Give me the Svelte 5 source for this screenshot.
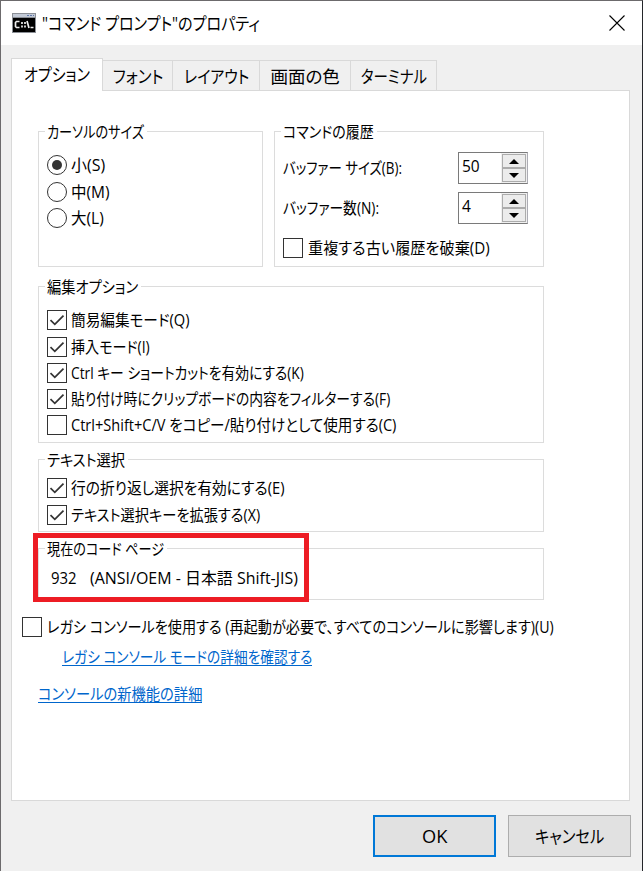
<script>
  const tabs = [
    { text: "オプション", width: 66, cell: 92, active: true },
    { text: "フォント", width: 50, cell: 70 },
    { text: "レイアウト", width: 65, cell: 87 },
    { text: "画面の色", width: 69, cell: 91 },
    { text: "ターミナル", width: 66, cell: 86 },
  ];

  let cursorSize = $state("S");

  const cursorSizes = [
    { id: "S", text: "小(S)", width: 34 },
    { id: "M", text: "中(M)", width: 39 },
    { id: "L", text: "大(L)", width: 33 },
  ];

  let history = $state([
    { text: "バッファー サイズ(B):", width: 119, value: 50 },
    { text: "バッファー数(N):", width: 96, value: 4 },
  ]);

  let discard = $state({ text: "重複する古い履歴を破棄(D)", width: 182, checked: false });

  let editOptions = $state([
    { text: "簡易編集モード(Q)", width: 118, checked: true },
    { text: "挿入モード(I)", width: 79, checked: true },
    { text: "Ctrl キー ショートカットを有効にする(K)", width: 233, checked: true },
    { text: "貼り付け時にクリップボードの内容をフィルターする(F)", width: 319, checked: true },
    { text: "Ctrl+Shift+C/V をコピー/貼り付けとして使用する(C)", width: 325, checked: false },
  ]);

  let selectOptions = $state([
    { text: "行の折り返し選択を有効にする(E)", width: 214, checked: true },
    { text: "テキスト選択キーを拡張する(X)", width: 189, checked: true },
  ]);

  let legacy = $state({
    text: "レガシ コンソールを使用する (再起動が必要で、すべてのコンソールに影響します)(U)",
    width: 507,
    checked: false,
  });

  // Condenses a run of text to the width the dialog reserves for it
  function fit(node, width) {
    const natural = node.firstElementChild.offsetWidth;
    node.style.width = `${width}px`;
    node.firstElementChild.style.transform = `scaleX(${width / natural})`;
  }
</script>

{#snippet label(text, width)}
  <span class="fit" use:fit={width}><span class="run">{text}</span></span>
{/snippet}

{#snippet check(item)}
  <button class="option" onclick={() => (item.checked = !item.checked)}>
    <span class="box">
      {#if item.checked}
        <svg width="18" height="18" viewBox="0 0 18 18">
          <path d="M2.5 9.2 6.8 13.4 15.5 4.6" />
        </svg>
      {/if}
    </span>
    {@render label(item.text, item.width)}
  </button>
{/snippet}

<div class="window">
  <header class="titlebar">
    <svg class="icon" width="24" height="20" viewBox="0 0 24 20">
      <rect width="24" height="20" fill="#8b8f96" />
      <rect x="1" y="1" width="22" height="3" fill="#c3cad6" />
      <path d="M15 2.5h2M18 2.5h2M21 2.5h1" stroke="#5f77a8" />
      <rect x="1" y="5" width="22" height="14" fill="#000" />
      <path
        d="M7.5 8.5H4.5L3.5 9.5V13.5L4.5 14.5H7.5M10 9v2M10 12.5v2M13 9v2M13 12.5v2M15 8l2 7M18.5 14.5H21.5"
        fill="none" stroke="#f0f0f0" stroke-width="1.7"
      />
    </svg>
    <h1>{@render label('"コマンド プロンプト"のプロパティ', 218)}</h1>
    <button class="close" aria-label="閉じる">
      <svg width="16" height="16" viewBox="0 0 16 16">
        <path d="M.5.5l15 15M15.5.5l-15 15" />
      </svg>
    </button>
  </header>

  <nav class="tabs">
    {#each tabs as tab}
      <button class="tab" class:active={tab.active} style:width="{tab.cell}px">
        {@render label(tab.text, tab.width)}
      </button>
    {/each}
  </nav>

  <main class="panel">
    <div class="columns">
      <section class="group cursor">
        <h2>{@render label("カーソルのサイズ", 97)}</h2>
        {#each cursorSizes as size}
          <button class="option" onclick={() => (cursorSize = size.id)}>
            <span class="radio" class:on={cursorSize === size.id}></span>
            {@render label(size.text, size.width)}
          </button>
        {/each}
      </section>

      <section class="group history">
        <h2>{@render label("コマンドの履歴", 91)}</h2>
        {#each history as row}
          <div class="row">
            {@render label(row.text, row.width)}
            <div class="number">
              <span class="value">{row.value}</span>
              <div class="spin">
                <button aria-label="増やす" onclick={() => row.value++}>
                  <svg width="10" height="5" viewBox="0 0 10 5"><path d="M0 5 5 0l5 5z" /></svg>
                </button>
                <button aria-label="減らす" onclick={() => row.value--}>
                  <svg width="10" height="5" viewBox="0 0 10 5"><path d="M0 0l5 5 5-5z" /></svg>
                </button>
              </div>
            </div>
          </div>
        {/each}
        {@render check(discard)}
      </section>
    </div>

    <section class="group edit">
      <h2>{@render label("編集オプション", 91)}</h2>
      {#each editOptions as item}
        {@render check(item)}
      {/each}
    </section>

    <section class="group select">
      <h2>{@render label("テキスト選択", 78)}</h2>
      {#each selectOptions as item}
        {@render check(item)}
      {/each}
    </section>

    <section class="group codepage">
      <h2>{@render label("現在のコード ページ", 117)}</h2>
      <p>{@render label("932", 26)}{@render label("(ANSI/OEM - 日本語 Shift-JIS)", 208)}</p>
      <div class="highlight"></div>
    </section>

    <div class="legacy">{@render check(legacy)}</div>
    <a class="indent" href="#legacy">{@render label("レガシ コンソール モードの詳細を確認する", 250)}</a>
    <a href="#features">{@render label("コンソールの新機能の詳細", 164)}</a>
  </main>

  <footer>
    <button class="default">{@render label("OK", 25)}</button>
    <button>{@render label("キャンセル", 69)}</button>
  </footer>
</div>

<style>
  :global(body) {
    margin: 0;
  }

  .window {
    box-sizing: border-box;
    width: 643px;
    height: 871px;
    overflow: hidden;
    background: #f0f0f0;
    border: 1px solid #6c6a6c;
    border-right-color: #24262a;
    border-bottom: 0;
    color: #000;
    font: 16px/20px "Open Sans", "Noto Sans CJK JP", sans-serif;
    font-feature-settings: "palt";
  }

  button {
    padding: 0;
    border: 0;
    background: none;
    color: inherit;
    font: inherit;
    font-feature-settings: inherit;
  }

  .fit {
    display: block;
    flex: none;
    height: 20px;
    font-size: 16px;
    white-space: pre;
    text-align: left;
  }

  .run {
    display: inline-block;
    font-size: 15.5px;
    line-height: 20px;
    transform-origin: left;
  }

  .titlebar {
    display: flex;
    align-items: center;
    height: 44px;
    padding-left: 11px;
    background: #fff;
  }

  .icon {
    margin-right: 6px;
  }

  h1 {
    flex: 1;
    margin: 0;
    font-size: 16px;
    font-weight: 400;
  }

  h1 .run,
  .tab .run,
  footer .run {
    font-size: 17.5px;
  }

  .close {
    display: flex;
    margin-right: 17px;
  }

  .close path {
    stroke: #000;
    stroke-width: 1.1;
  }

  .tabs {
    display: flex;
    align-items: flex-end;
    height: 45px;
    padding-left: 10px;
  }

  .tab {
    display: flex;
    justify-content: center;
    align-items: center;
    box-sizing: border-box;
    height: 31px;
    border: 1px solid #d9d9d9;
    border-left: 0;
    margin-bottom: -1px;
  }

  .tab.active {
    position: relative;
    height: 33px;
    padding-bottom: 2px;
    border-left: 1px solid #d9d9d9;
    border-bottom: 0;
    background: #fff;
  }

  .panel {
    box-sizing: border-box;
    width: 619px;
    height: 711px;
    margin-left: 10px;
    padding: 40px 0 0 26px;
    border: 1px solid #d9d9d9;
    background: #fff;
  }

  .columns {
    display: flex;
    gap: 11px;
  }

  .group {
    position: relative;
    box-sizing: border-box;
    width: 506px;
    padding-left: 8px;
    border: 1px solid #dcdcdc;
  }

  h2 {
    width: max-content;
    height: 20px;
    margin: -10px 0 0 -2px;
    padding: 0 3px 0 2px;
    background: #fff;
    font-size: 16px;
    font-weight: 400;
  }

  .option {
    display: flex;
    align-items: center;
    gap: 4px;
    height: 20px;
    margin-bottom: 6px;
  }

  .box,
  .radio {
    box-sizing: border-box;
    width: 20px;
    height: 20px;
    border: 1px solid #333;
    background: #fff;
  }

  .box svg {
    display: block;
  }

  .box path {
    fill: none;
    stroke: #333;
    stroke-width: 1.7;
  }

  .radio {
    display: flex;
    justify-content: center;
    align-items: center;
    border-radius: 50%;
  }

  .radio.on::before {
    content: "";
    width: 10px;
    height: 10px;
    border-radius: 50%;
    background: #333;
  }

  .cursor {
    width: 225px;
    height: 136px;
  }

  .cursor h2 {
    margin-bottom: 13px;
  }

  .history {
    width: 270px;
    height: 136px;
  }

  .history h2 {
    margin-bottom: 10px;
  }

  .row {
    display: flex;
    justify-content: space-between;
    align-items: center;
    height: 32px;
    margin: 0 15px 8px 0;
  }

  .history .option {
    margin-top: 14px;
    gap: 5px;
  }

  .number {
    display: flex;
    box-sizing: border-box;
    width: 70px;
    height: 32px;
    border: 1px solid #7a7a7a;
    border-right-color: #acacb4;
  }

  .value {
    flex: 1;
    padding: 3px 0 0 3px;
    font-size: 15.5px;
  }

  .spin {
    display: flex;
    flex-direction: column;
    width: 24px;
    padding: 1px;
    background: #f0f0f0;
  }

  .spin button {
    display: flex;
    flex: 1;
    justify-content: center;
    align-items: center;
    border: 1px solid #acacac;
    background: #ececec;
  }

  .edit {
    height: 157px;
    margin-top: 19px;
  }

  .edit h2 {
    margin-bottom: 13px;
  }

  .edit h2 + .option,
  .cursor h2 + .option,
  .select h2 + .option {
    margin-bottom: 7px;
  }

  .select {
    height: 73px;
    margin-top: 16px;
  }

  .select h2 {
    margin-bottom: 8px;
  }

  .codepage {
    height: 52px;
    margin-top: 16px;
  }

  .codepage p {
    display: flex;
    gap: 13px;
    margin: 9px 0 0 4px;
  }

  /* Red frame laid over the code page group */
  .highlight {
    position: absolute;
    top: -16px;
    left: -6px;
    box-sizing: border-box;
    width: 276px;
    height: 69px;
    border: 5px solid #ed1c24;
  }

  .legacy {
    margin: 17px 0 0 -16px;
  }

  .legacy .option {
    gap: 5px;
    margin-bottom: 10px;
  }

  a {
    display: block;
    width: max-content;
    height: 18px;
    margin-bottom: 18px;
    border-bottom: 1px solid #0066cc;
    color: #0066cc;
    text-decoration: none;
  }

  .indent {
    margin-left: 24px;
  }

  footer {
    display: flex;
    justify-content: flex-end;
    gap: 12px;
    margin: 14px 11px 0 0;
  }

  footer button {
    display: flex;
    justify-content: center;
    align-items: center;
    box-sizing: border-box;
    width: 123px;
    height: 42px;
    border: 1px solid #adadad;
    background: #e1e1e1;
  }

  footer .default {
    border: 2px solid #0078d7;
  }
</style>
